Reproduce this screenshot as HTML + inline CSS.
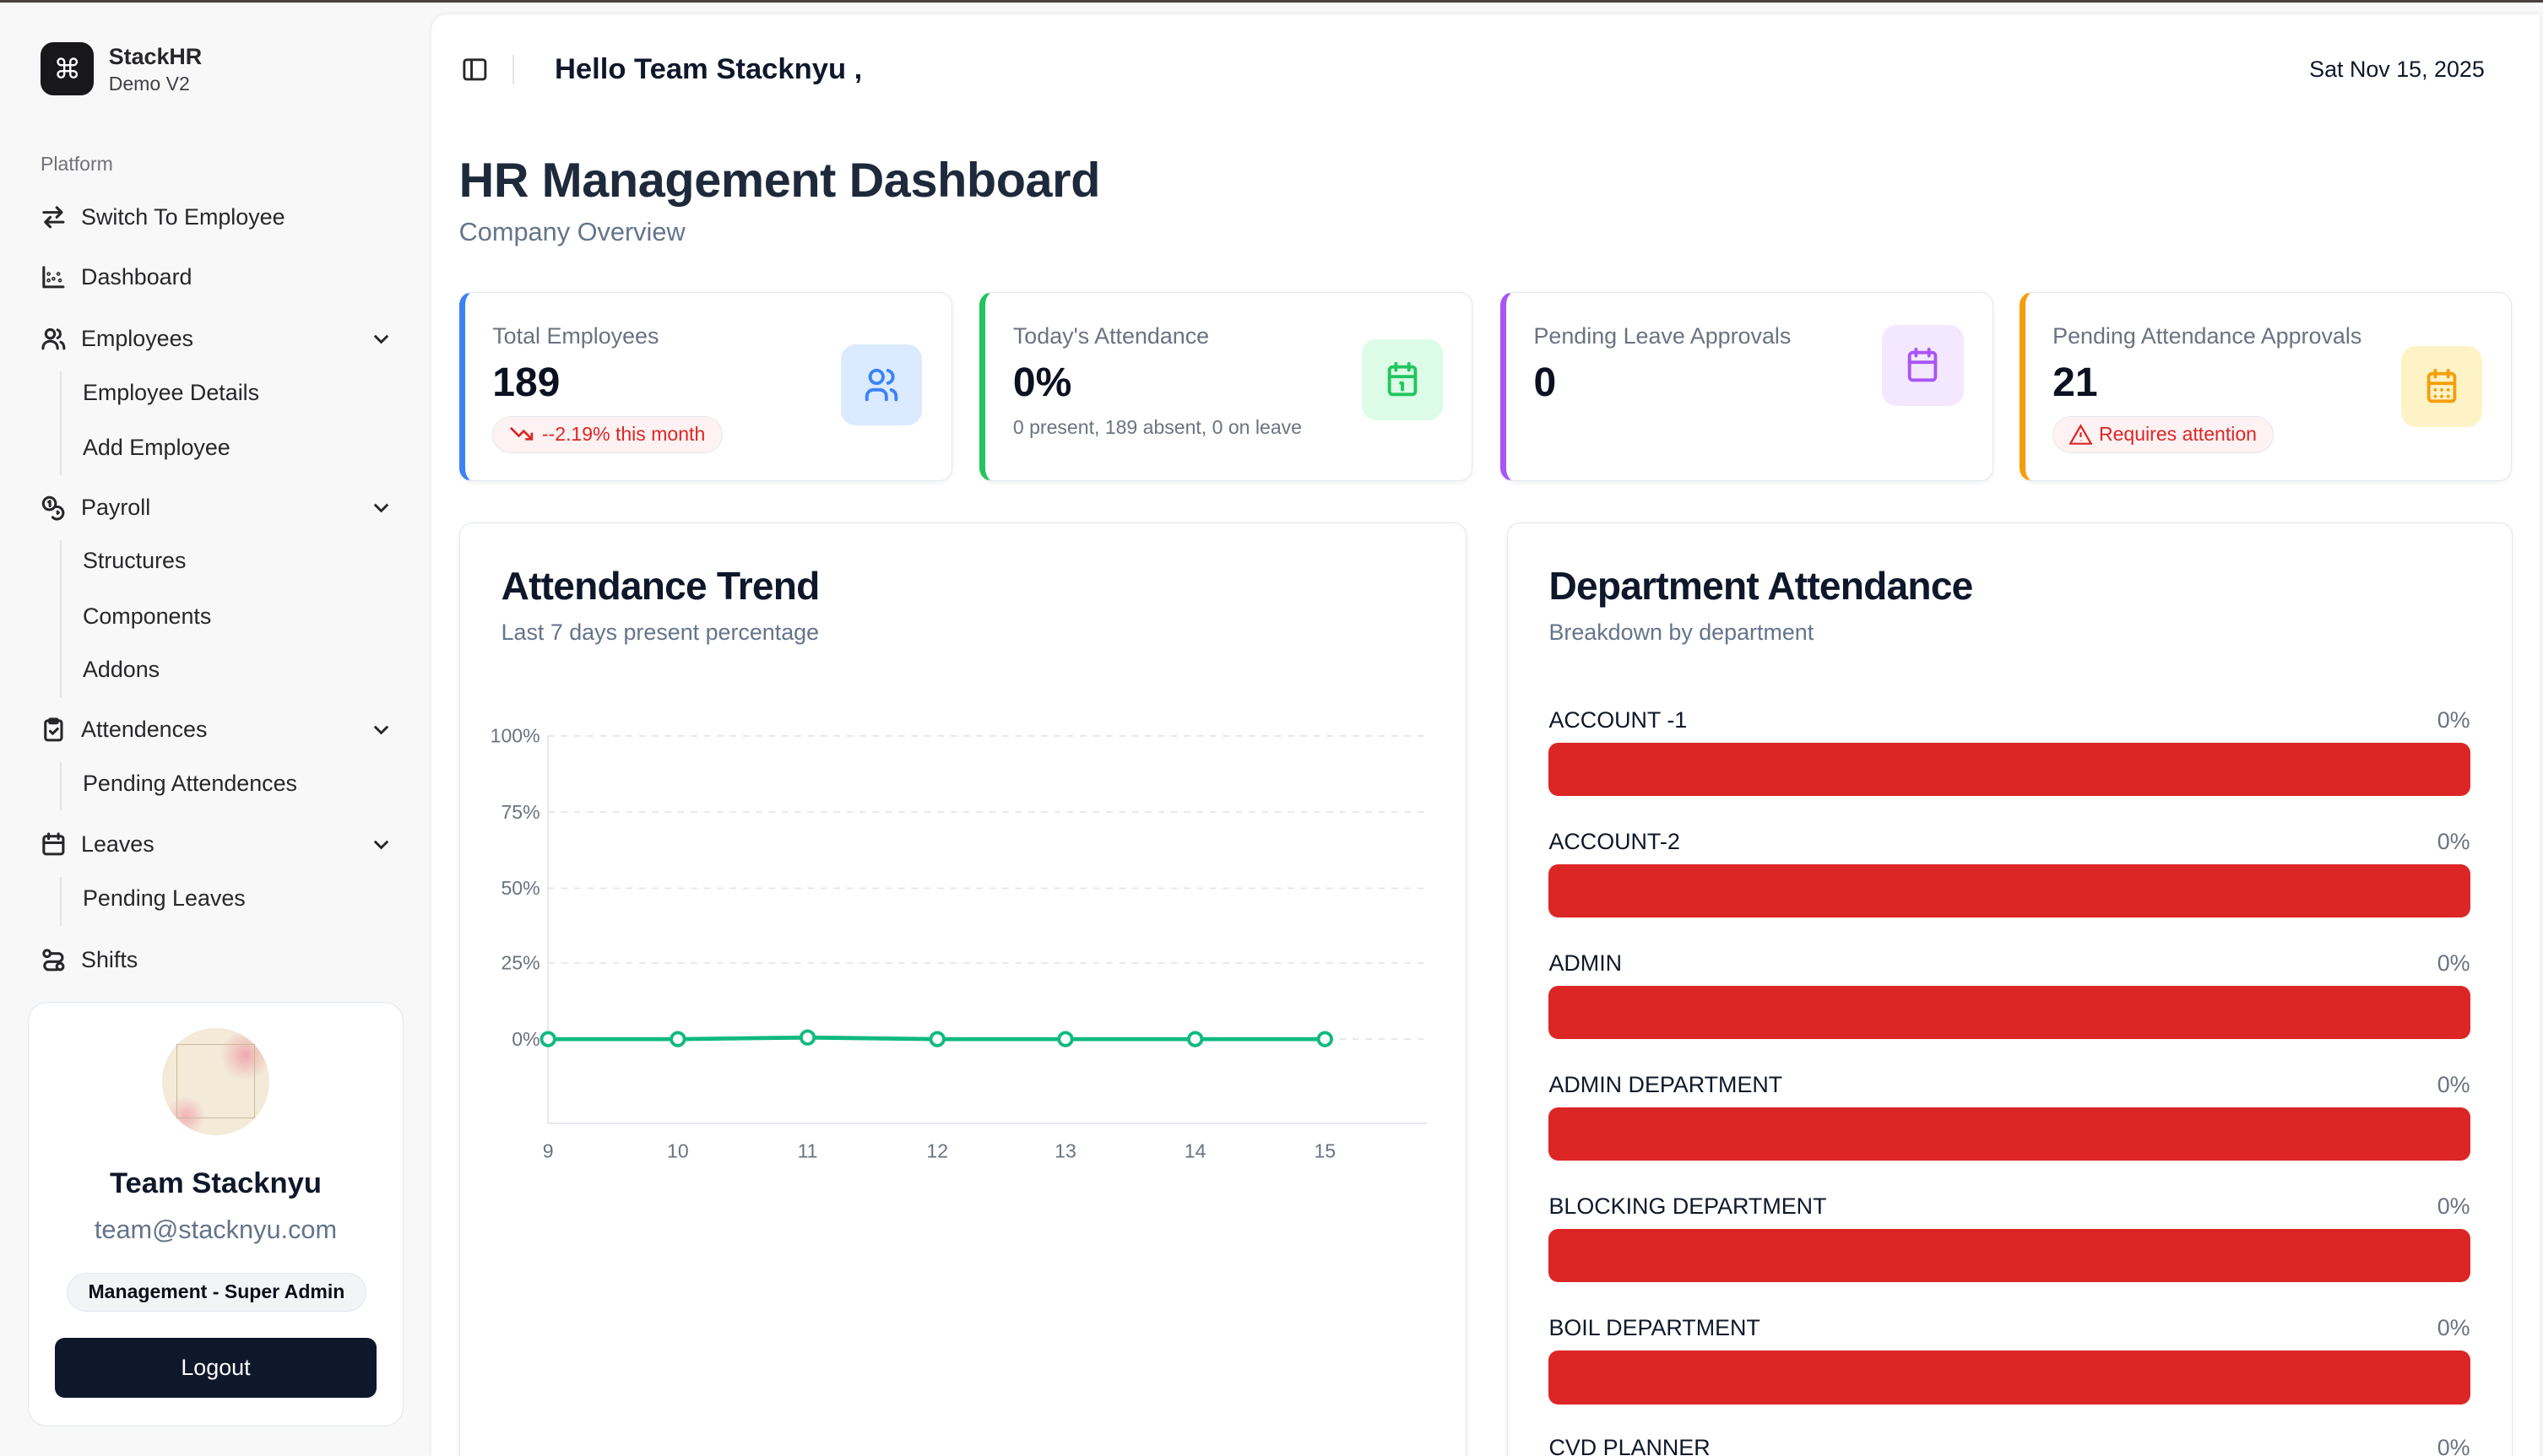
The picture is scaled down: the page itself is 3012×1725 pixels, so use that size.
<!DOCTYPE html>
<html><head><meta charset="utf-8"><style>
html{zoom:1.92092;height:898px;overflow:hidden}
*{box-sizing:border-box;margin:0;padding:0}
body{width:1568px;height:898px;overflow:hidden;background:#f8f8f8;font-family:"Liberation Sans",sans-serif;color:#0f172a;position:relative}
.a{position:absolute}
.top{left:0;top:0;width:1568px;height:1.5px;background:#4a3f3f}
.nav{left:25px;font-size:14px;color:#27272a;display:flex;align-items:center;height:20px}
.nav svg{width:16px;height:16px;margin-right:9px;fill:none;stroke:#27272a;stroke-width:1.6;stroke-linecap:round;stroke-linejoin:round}
.sub{left:51px;font-size:14px;color:#27272a;height:20px;line-height:20px}
.chev{left:229px;width:12px;height:12px}
.main{left:266px;top:9px;width:1300px;height:889px;background:#fff;border-radius:10px 0 0 0;box-shadow:0 0 3px rgba(0,0,0,.08)}
.card{background:#fff;border:1px solid #e2e8f0;border-radius:8px;box-shadow:0 1px 3px rgba(0,0,0,.06)}
.stat{top:180px;height:117px;width:304px;border-left-width:4px}
.lbl{font-size:14px;color:#6b7280;position:absolute;left:17px;top:19px}
.val{font-size:25px;font-weight:bold;position:absolute;left:17px;top:41px;color:#0b1120}
.ib{position:absolute;width:50px;height:50px;border-radius:9px;display:flex;align-items:center;justify-content:center}
.ib svg{width:24px;height:24px;fill:none;stroke-width:2;stroke-linecap:round;stroke-linejoin:round}
.pill{position:absolute;left:17px;top:76px;height:23px;border:1px solid #e2e8f0;background:#fef2f2;color:#dc2626;font-size:12px;border-radius:12px;padding:0 10px;display:flex;align-items:center;gap:4px}
.dl{left:955px;font-size:14px;color:#0f172a;width:568px;display:flex;justify-content:space-between}
.dl span{color:#6b7280}
.bar{left:955px;width:568px;height:33px;background:#dc2626;border-radius:6px}
</style></head><body>
<div class="a top"></div>

<div class="a" style="left:25px;top:26px;width:33px;height:33px;background:#18181b;border-radius:8px;color:#fff;font-size:17px;display:flex;align-items:center;justify-content:center;font-family:'DejaVu Sans',sans-serif">⌘</div>
<div class="a" style="left:67px;top:27px;font-size:14px;font-weight:bold;color:#27272a">StackHR</div>
<div class="a" style="left:67px;top:45px;font-size:12px;color:#3f3f46">Demo V2</div>
<div class="a" style="left:25px;top:94px;font-size:12px;color:#71717a">Platform</div>

<div class="a nav" style="top:124px"><svg viewBox="0 0 16 16"><path d="M2 5h11M10 2l3 3-3 3M14 11H3M6 8l-3 3 3 3"/></svg>Switch To Employee</div>
<div class="a nav" style="top:161px"><svg viewBox="0 0 16 16"><path d="M2 2v12h12"/><circle cx="5" cy="6" r=".4"/><circle cx="5" cy="10" r=".4"/><circle cx="8" cy="9" r=".4"/><circle cx="11" cy="6" r=".4"/><circle cx="12" cy="10" r=".4"/></svg>Dashboard</div>
<div class="a nav" style="top:199px"><svg viewBox="0 0 16 16"><circle cx="6" cy="5" r="2.7"/><path d="M1.5 14c0-3 2-4.5 4.5-4.5s4.5 1.5 4.5 4.5M10.5 2.5a2.7 2.7 0 0 1 0 5M12.5 10c1.3.6 2 2 2 4"/></svg>Employees</div>
<svg class="a chev" style="top:203px" viewBox="0 0 12 12" fill="none" stroke="#27272a" stroke-width="1.5"><path d="M2 4l4 4 4-4"/></svg>
<div class="a" style="left:37px;top:229px;width:1px;height:64px;background:#e4e4e7"></div>
<div class="a sub" style="top:232px">Employee Details</div>
<div class="a sub" style="top:266px">Add Employee</div>
<div class="a nav" style="top:303px"><svg viewBox="0 0 16 16"><circle cx="5.5" cy="5.5" r="3.8"/><path d="M5 4.5l.8-.5v3M10 7.5a3.8 3.8 0 1 1-2.5 6.5M10.5 10.5l.6.6-.6.6"/></svg>Payroll</div>
<svg class="a chev" style="top:307px" viewBox="0 0 12 12" fill="none" stroke="#27272a" stroke-width="1.5"><path d="M2 4l4 4 4-4"/></svg>
<div class="a" style="left:37px;top:333px;width:1px;height:97px;background:#e4e4e7"></div>
<div class="a sub" style="top:336px">Structures</div>
<div class="a sub" style="top:370px">Components</div>
<div class="a sub" style="top:403px">Addons</div>
<div class="a nav" style="top:440px"><svg viewBox="0 0 16 16"><rect x="3" y="2.5" width="10" height="12" rx="1.5"/><rect x="5.5" y="1.5" width="5" height="2.5" rx=".6"/><path d="M6 9l1.5 1.5L10.5 7.5"/></svg>Attendences</div>
<svg class="a chev" style="top:444px" viewBox="0 0 12 12" fill="none" stroke="#27272a" stroke-width="1.5"><path d="M2 4l4 4 4-4"/></svg>
<div class="a" style="left:37px;top:470px;width:1px;height:30px;background:#e4e4e7"></div>
<div class="a sub" style="top:473px">Pending Attendences</div>
<div class="a nav" style="top:511px"><svg viewBox="0 0 16 16"><rect x="2" y="3" width="12" height="11" rx="1.5"/><path d="M5 1.5v3M11 1.5v3M2 7h12"/></svg>Leaves</div>
<svg class="a chev" style="top:515px" viewBox="0 0 12 12" fill="none" stroke="#27272a" stroke-width="1.5"><path d="M2 4l4 4 4-4"/></svg>
<div class="a" style="left:37px;top:541px;width:1px;height:30px;background:#e4e4e7"></div>
<div class="a sub" style="top:544px">Pending Leaves</div>
<div class="a nav" style="top:582px"><svg viewBox="0 0 16 16"><circle cx="4" cy="4" r="2"/><circle cx="12" cy="12" r="2"/><path d="M6 4h5a2.5 2.5 0 0 1 0 5H5a2.5 2.5 0 0 0 0 5h5"/></svg>Shifts</div>

<div class="a" style="left:17px;top:618px;width:232px;height:262px;background:#fff;border:1px solid #e2e8f0;border-radius:12px"></div>
<div class="a" style="left:100px;top:634px;width:66px;height:66px;border-radius:50%;background:radial-gradient(circle at 78% 25%,#f0a8b0 0,#f0c8c0 10%,transparent 22%),radial-gradient(circle at 22% 82%,#f3b0b6 0,transparent 16%),#f3ead8"><div style="position:absolute;left:9px;top:10px;width:48px;height:46px;border:1px solid #c9b89c"></div></div>
<div class="a" style="left:0;width:266px;top:720px;text-align:center;font-size:18px;font-weight:bold;color:#0f172a">Team Stacknyu</div>
<div class="a" style="left:0;width:266px;top:749px;text-align:center;font-size:16px;color:#64748b">team@stacknyu.com</div>
<div class="a" style="left:41px;top:785px;width:185px;height:24px;border:1px solid #e2e8f0;background:#f3f4f6;border-radius:12px;font-size:12px;font-weight:bold;text-align:center;line-height:22px;color:#0b0f19">Management - Super Admin</div>
<div class="a" style="left:34px;top:825px;width:198px;height:37px;background:#0f172a;border-radius:6px;color:#fff;font-size:14px;text-align:center;line-height:37px">Logout</div>

<div class="a main"></div>
<svg class="a" style="left:285px;top:35px" width="16" height="16" viewBox="0 0 16 16" fill="none" stroke="#27272a" stroke-width="1.5"><rect x="1.5" y="2" width="13" height="12" rx="1.5"/><path d="M6 2v12"/></svg>
<div class="a" style="left:316px;top:34px;width:1px;height:18px;background:#e4e4e7"></div>
<div class="a" style="left:342px;top:33px;font-size:18px;font-weight:bold;color:#0f172a">Hello Team Stacknyu ,</div>
<div class="a" style="left:1382px;width:150px;text-align:right;top:35px;font-size:14px;color:#0f172a">Sat Nov 15, 2025</div>

<div class="a" style="left:283px;top:94px;font-size:30px;font-weight:bold;color:#1e293b;letter-spacing:-.2px">HR Management Dashboard</div>
<div class="a" style="left:283px;top:134px;font-size:16px;color:#64748b">Company Overview</div>

<div class="a card stat" style="left:283px;border-left-color:#3b82f6">
 <div class="lbl">Total Employees</div><div class="val">189</div>
 <div class="pill"><svg width="16" height="12" viewBox="0 0 16 12" fill="none" stroke="#dc2626" stroke-width="1.4"><path d="M1 2l5 5 3-3 5 5M14 5v4h-4"/></svg>--2.19% this month</div>
 <div class="ib" style="left:232px;top:32px;background:#dbeafe"><svg viewBox="0 0 24 24" stroke="#3b82f6"><circle cx="9" cy="7" r="4"/><path d="M3 21v-2a4 4 0 0 1 4-4h4a4 4 0 0 1 4 4v2M16 3.1a4 4 0 0 1 0 7.8M21 21v-2a4 4 0 0 0-3-3.9"/></svg></div>
</div>
<div class="a card stat" style="left:604px;border-left-color:#22c55e">
 <div class="lbl">Today's Attendance</div><div class="val">0%</div>
 <div class="a" style="left:17px;top:76px;font-size:12px;color:#6b7280">0 present, 189 absent, 0 on leave</div>
 <div class="ib" style="left:232px;top:29px;background:#dcfce7"><svg viewBox="0 0 24 24" stroke="#22c55e"><rect x="4" y="4" width="16" height="17" rx="2"/><path d="M8 2v4M16 2v4M4 10h16M11 14h1v4"/></svg></div>
</div>
<div class="a card stat" style="left:925px;border-left-color:#a855f7">
 <div class="lbl">Pending Leave Approvals</div><div class="val">0</div>
 <div class="ib" style="left:232px;top:20px;background:#f3e8ff"><svg viewBox="0 0 24 24" stroke="#a855f7"><rect x="4" y="4" width="16" height="17" rx="2"/><path d="M8 2v4M16 2v4M4 10h16"/></svg></div>
</div>
<div class="a card stat" style="left:1245px;border-left-color:#f59e0b">
 <div class="lbl">Pending Attendance Approvals</div><div class="val">21</div>
 <div class="pill"><svg width="14" height="13" viewBox="0 0 24 22" fill="none" stroke="#dc2626" stroke-width="2"><path d="M12 2L1 21h22zM12 9v5M12 17.5v.5"/></svg>Requires attention</div>
 <div class="ib" style="left:232px;top:33px;background:#fef3c7"><svg viewBox="0 0 24 24" stroke="#f59e0b"><rect x="4" y="4" width="16" height="17" rx="2"/><path d="M8 2v4M16 2v4M4 10h16M8 14h.01M12 14h.01M16 14h.01M8 18h.01M12 18h.01M16 18h.01"/></svg></div>
</div>

<div class="a card" style="left:283px;top:322px;width:621px;height:590px"></div>
<div class="a" style="left:309px;top:347px;font-size:24px;font-weight:bold;color:#0f172a;letter-spacing:-.4px">Attendance Trend</div>
<div class="a" style="left:309px;top:382px;font-size:14px;color:#64748b">Last 7 days present percentage</div>
<svg class="a" style="left:290px;top:440px" width="600" height="285" viewBox="290 440 600 285" font-family="Liberation Sans" font-size="12" fill="#6b7280">
 <g stroke="#e5e7eb" stroke-dasharray="4 4"><path d="M338 454H880M338 501H880M338 548H880M338 594H880M338 641H880"/></g>
 <path d="M338 454V693H880" stroke="#e5e7eb" fill="none"/>
 <g text-anchor="end"><text x="333" y="458">100%</text><text x="333" y="505">75%</text><text x="333" y="552">50%</text><text x="333" y="598">25%</text><text x="333" y="645">0%</text></g>
 <g text-anchor="middle"><text x="338" y="714">9</text><text x="418" y="714">10</text><text x="498" y="714">11</text><text x="578" y="714">12</text><text x="657" y="714">13</text><text x="737" y="714">14</text><text x="817" y="714">15</text></g>
 <path d="M338 641L418 641L498 640L578 641L817 641" stroke="#10b981" stroke-width="2.5" fill="none"/>
 <g fill="#fff" stroke="#10b981" stroke-width="2"><circle cx="338" cy="641" r="4"/><circle cx="418" cy="641" r="4"/><circle cx="498" cy="640" r="4"/><circle cx="578" cy="641" r="4"/><circle cx="657" cy="641" r="4"/><circle cx="737" cy="641" r="4"/><circle cx="817" cy="641" r="4"/></g>
</svg>

<div class="a card" style="left:929px;top:322px;width:620px;height:590px"></div>
<div class="a" style="left:955px;top:347px;font-size:24px;font-weight:bold;color:#0f172a;letter-spacing:-.4px">Department Attendance</div>
<div class="a" style="left:955px;top:382px;font-size:14px;color:#64748b">Breakdown by department</div>

<div class="a dl" style="top:436px">ACCOUNT -1<span>0%</span></div><div class="a bar" style="top:458px"></div>
<div class="a dl" style="top:511px">ACCOUNT-2<span>0%</span></div><div class="a bar" style="top:533px"></div>
<div class="a dl" style="top:586px">ADMIN<span>0%</span></div><div class="a bar" style="top:608px"></div>
<div class="a dl" style="top:661px">ADMIN DEPARTMENT<span>0%</span></div><div class="a bar" style="top:683px"></div>
<div class="a dl" style="top:736px">BLOCKING DEPARTMENT<span>0%</span></div><div class="a bar" style="top:758px"></div>
<div class="a dl" style="top:811px">BOIL DEPARTMENT<span>0%</span></div><div class="a bar" style="top:833px"></div>
<div class="a dl" style="top:885px">CVD PLANNER<span>0%</span></div>
</body></html>
